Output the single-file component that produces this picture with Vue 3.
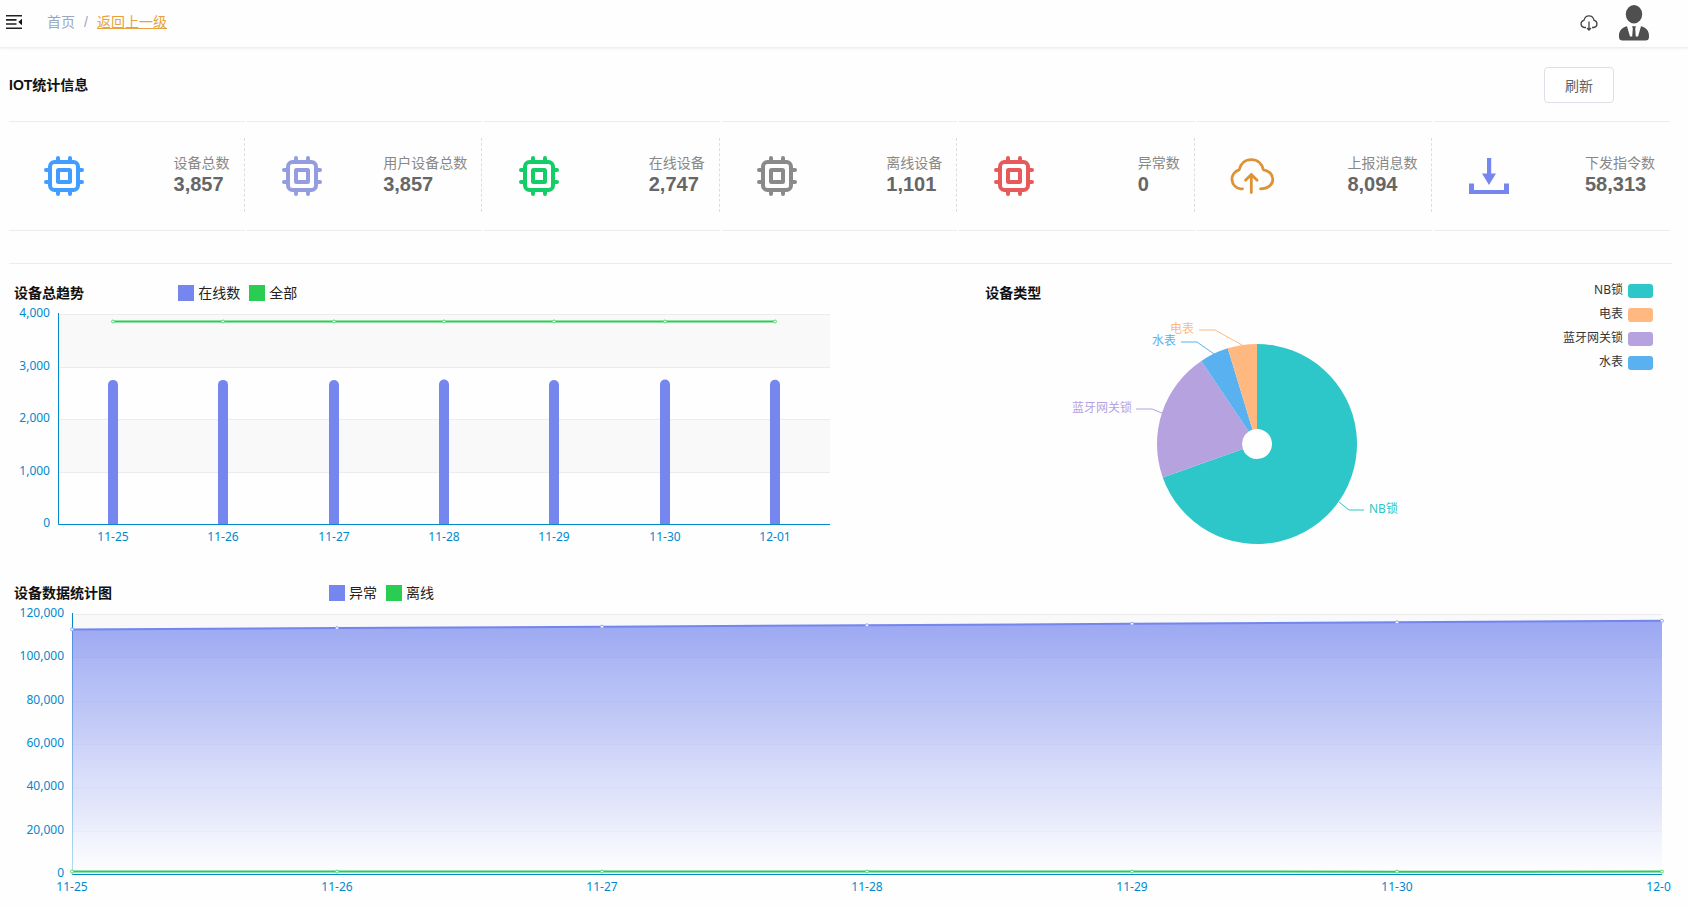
<script setup>
import { computed, onBeforeUnmount, onMounted, ref } from 'vue'

const stats = [
  { label: '设备总数', value: '3,857', icon: 'chip', tone: 'blue' },
  { label: '用户设备总数', value: '3,857', icon: 'chip', tone: 'lavender' },
  { label: '在线设备', value: '2,747', icon: 'chip', tone: 'green' },
  { label: '离线设备', value: '1,101', icon: 'chip', tone: 'gray' },
  { label: '异常数', value: '0', icon: 'chip', tone: 'red' },
  { label: '上报消息数', value: '8,094', icon: 'cloud', tone: 'orange' },
  { label: '下发指令数', value: '58,313', icon: 'download', tone: 'indigo' }
]

const days = ['11-25', '11-26', '11-27', '11-28', '11-29', '11-30', '12-01']

const trendEl = ref(null)
const pieEl = ref(null)
const dataEl = ref(null)
const trendWidth = ref(960)
const pieWidth = ref(690)
const dataWidth = ref(1660)

let observer
function measure() {
  trendWidth.value = trendEl.value.clientWidth
  pieWidth.value = pieEl.value.clientWidth
  dataWidth.value = dataEl.value.clientWidth
}
onMounted(() => {
  measure()
  observer = new ResizeObserver(measure)
  observer.observe(trendEl.value)
  observer.observe(pieEl.value)
  observer.observe(dataEl.value)
})
onBeforeUnmount(() => observer.disconnect())

function buildAxis(max, step, top, bottom) {
  const ticks = []
  for (let v = 0; v <= max; v += step) {
    ticks.push({
      label: v.toLocaleString('en-US'),
      y: Math.round(bottom - (v / max) * (bottom - top))
    })
  }
  const bands = ticks.slice(1).map((t, i) => ({ y: t.y, height: ticks[i].y - t.y, dark: i % 2 === 1 }))
  return { ticks, bands }
}

// Online / total trend
const online = [2745, 2745, 2744, 2751, 2743, 2754, 2747]
const trend = computed(() => {
  const left = 49
  const right = Math.round(trendWidth.value * 0.846)
  const top = 9
  const bottom = 219
  const slot = (right - left) / days.length
  const points = days.map((day, i) => {
    const x = Math.round(left + slot * (i + 0.5))
    const y = bottom - (online[i] / 4000) * (bottom - top)
    return {
      day,
      x,
      totalY: bottom - (3857 / 4000) * (bottom - top),
      bar: `M${x - 5} ${bottom}V${y + 5}a5 5 0 0 1 10 0V${bottom}z`
    }
  })
  return { left, right, top, bottom, points, ...buildAxis(4000, 1000, top, bottom) }
})

// Abnormal / offline statistics
const abnormal = [112900, 113500, 114150, 114800, 115500, 116200, 116900]
const offline = [1110, 1108, 1105, 1104, 1106, 1090, 1101]
const data = computed(() => {
  const left = 63
  const right = dataWidth.value - 10
  const top = 9
  const bottom = 269
  const step = (right - left) / (days.length - 1)
  const scale = v => bottom - (v / 120000) * (bottom - top)
  const points = days.map((day, i) => ({
    day,
    x: Math.round(left + step * i),
    a: scale(abnormal[i]),
    b: scale(offline[i])
  }))
  const line = points.map(p => `${p.x},${p.a}`).join(' ')
  return {
    left, right, top, bottom, points, line,
    area: `${left},${bottom} ${line} ${right},${bottom}`,
    offline: points.map(p => `${p.x},${p.b}`).join(' '),
    ...buildAxis(120000, 20000, top, bottom)
  }
})

// Device types, share given in degrees
const types = [
  { name: 'NB锁', tone: 'teal', from: 0, to: 250.5, guide: '82,58 92,66 107,66', x: 112, y: 65, anchor: 'start' },
  { name: '蓝牙网关锁', tone: 'purple', from: 250.5, to: 326.2, guide: '-95,-31 -105,-35 -121,-35', x: -125, y: -36, anchor: 'end' },
  { name: '水表', tone: 'sky', from: 326.2, to: 343, guide: '-43,-90 -60,-102 -76,-102', x: -81, y: -103, anchor: 'end' },
  { name: '电表', tone: 'peach', from: 343, to: 360, guide: '-15,-99 -42,-114 -58,-114', x: -63, y: -115, anchor: 'end' }
]
const typeLegend = [types[0], types[3], types[1], types[2]]
function sector({ from, to }) {
  const at = (deg, r) => {
    const rad = (deg * Math.PI) / 180
    return `${(r * Math.sin(rad)).toFixed(2)} ${(-r * Math.cos(rad)).toFixed(2)}`
  }
  const large = to - from > 180 ? 1 : 0
  return `M${at(from, 100)}A100 100 0 ${large} 1 ${at(to, 100)}L${at(to, 15)}A15 15 0 ${large} 0 ${at(from, 15)}z`
}
</script>

<template>
  <div class="page">
    <header class="topbar">
      <button class="icon-button menu" type="button" aria-label="折叠菜单">
        <svg width="16" height="14" viewBox="0 0 16 14">
          <path d="M0 .8h16M0 4.900h10.500M0 9h10.500M0 13.200h16" fill="none" stroke="#222" stroke-width="1.600" />
          <path d="M16 3.800v6.400L12.300 7z" fill="#111" />
        </svg>
      </button>
      <nav class="crumbs">
        <span>首页</span>
        <span class="slash">/</span>
        <a href="#">返回上一级</a>
      </nav>
      <button class="icon-button cloud" type="button" aria-label="下载">
        <svg width="18" height="16" viewBox="0 0 18 16" fill="none" stroke="#444" stroke-width="1.3">
          <path d="M6 12.5H4.3A3.6 3.6 0 0 1 3.9 5.4C4.5 2.6 6.5.8 9 .8s4.500 1.800 5.100 4.600a3.600 3.600 0 0 1-.400 7.100H12" />
          <path d="M9 6.500v8.500M7 13l2 2 2-2" />
        </svg>
      </button>
      <svg class="avatar" width="30" height="36" viewBox="0 0 30 36" fill="#4f4f4f">
        <ellipse cx="15" cy="9.200" rx="8.200" ry="9.200" />
        <path d="M8 21.200 11 31.500h2.200l.6-8.300-.800-2h4l-.800 2 .6 8.300H19l3-10.300c5 1.200 8 4.500 8 9.300v1.500c0 2.500-1.300 3.500-3.500 3.500h-23C1.300 35.500 0 34.500 0 32v-1.500c0-4.800 3-8.100 8-9.300z" />
      </svg>
    </header>

    <main class="content">
      <div class="title-row">
        <h1>IOT统计信息</h1>
        <button class="refresh" type="button">刷新</button>
      </div>

      <section class="stats">
        <article v-for="s in stats" :key="s.label" class="stat">
          <div class="stat-body">
            <div class="stat-icon" :class="s.tone">
              <svg v-if="s.icon === 'chip'" width="40" height="40" viewBox="0 0 40 40" fill="none" stroke="currentColor" stroke-width="4">
                <rect x="6" y="6" width="28" height="28" rx="4.500" />
                <rect x="14" y="14" width="12" height="12" rx=".5" />
                <path stroke-linecap="round" d="M14 2v3M26 2v3M14 35v3M26 35v3M2 14h3M2 26h3M35 14h3M35 26h3" />
              </svg>
              <svg v-else-if="s.icon === 'cloud'" width="46" height="36" viewBox="0 0 46 36" fill="none" stroke="currentColor" stroke-width="2.800" stroke-linecap="round" stroke-linejoin="round">
                <path d="M13.500 30.800H11.500A9.700 9.700 0 0 1 10.200 11.800C11.600 5.500 16.200 1.600 22.300 1.600S33 5.500 34.400 11.800C40 12.500 43.800 16.500 43.800 21.300c0 5.500-4.800 9.500-12.300 9.500" />
                <path d="M22.300 34.500v-18M16.500 22.300l5.800-5.800 5.800 5.800" />
              </svg>
              <svg v-else width="40" height="36" viewBox="0 0 40 36" fill="currentColor">
                <path d="M18 0h4.200v15.500H27L20 27l-7-11.500h5z" />
                <path d="M0 25.500h5V32h30v-6.500h5V36H0z" />
              </svg>
            </div>
            <div class="stat-text">
              <div class="stat-label">{{ s.label }}</div>
              <div class="stat-value">{{ s.value }}</div>
            </div>
          </div>
        </article>
      </section>

      <div class="charts">
        <section class="panel">
          <div class="panel-head trend-head">
            <h2>设备总趋势</h2>
            <ul class="legend">
              <li><i class="indigo"></i>在线数</li>
              <li><i class="lime"></i>全部</li>
            </ul>
          </div>
          <div ref="trendEl" class="plot">
            <svg :width="trendWidth" height="245">
              <rect v-for="b in trend.bands" :key="b.y" :x="trend.left" :y="b.y" :width="trend.right - trend.left" :height="b.height" :class="b.dark ? 'band-dark' : 'band-light'" />
              <g v-for="t in trend.ticks" :key="t.label">
                <line class="grid" :x1="trend.left" :x2="trend.right" :y1="t.y + 0.5" :y2="t.y + 0.5" />
                <text class="tick" x="41" :y="t.y + 3" text-anchor="end">{{ t.label }}</text>
              </g>
              <path class="axis" :d="`M${trend.left + 0.5} ${trend.top - 1}V${trend.bottom + 0.5}H${trend.right}`" />
              <path v-for="p in trend.points" :key="p.day" class="bar" :d="p.bar" />
              <line class="green-line" :x1="trend.points[0].x" :x2="trend.points[6].x" :y1="trend.points[0].totalY" :y2="trend.points[0].totalY" />
              <g v-for="p in trend.points" :key="p.day">
                <circle class="dot green-dot" :cx="p.x" :cy="p.totalY" r="1.500" />
                <text class="tick" :x="p.x" y="236" text-anchor="middle">{{ p.day }}</text>
              </g>
            </svg>
          </div>
        </section>

        <section class="panel">
          <div class="panel-head">
            <h2>设备类型</h2>
          </div>
          <ul class="type-legend">
            <li v-for="t in typeLegend" :key="t.name"><span>{{ t.name }}</span><i :class="t.tone"></i></li>
          </ul>
          <div ref="pieEl" class="plot">
            <svg :width="pieWidth" height="245">
              <g :transform="`translate(${Math.round(pieWidth * 0.4)} 139)`">
                <g v-for="t in types" :key="t.name" :class="t.tone">
                  <path :d="sector(t)" fill="currentColor" />
                  <polyline :points="t.guide" fill="none" stroke="currentColor" />
                  <text class="pie-label" :x="t.x" :y="t.y + 4" :text-anchor="t.anchor">{{ t.name }}</text>
                </g>
              </g>
            </svg>
          </div>
        </section>
      </div>

      <section class="panel">
        <div class="panel-head data-head">
          <h2>设备数据统计图</h2>
          <ul class="legend">
            <li><i class="indigo"></i>异常</li>
            <li><i class="lime"></i>离线</li>
          </ul>
        </div>
        <div ref="dataEl" class="plot">
          <svg :width="dataWidth" height="295">
            <defs>
              <linearGradient id="abnormalFill" x1="0" y1="0" x2="0" y2="1">
                <stop offset="0" stop-color="#7385ee" />
                <stop offset="1" stop-color="#ffffff" />
              </linearGradient>
            </defs>
            <rect v-for="b in data.bands" :key="b.y" :x="data.left" :y="b.y" :width="data.right - data.left" :height="b.height" :class="b.dark ? 'band-dark' : 'band-light'" />
            <g v-for="t in data.ticks" :key="t.label">
              <line class="grid" :x1="data.left" :x2="data.right" :y1="t.y + 0.5" :y2="t.y + 0.5" />
              <text class="tick" x="55" :y="t.y + 3" text-anchor="end">{{ t.label }}</text>
            </g>
            <path class="axis" :d="`M${data.left + 0.5} ${data.top - 1}V${data.bottom + 0.5}H${data.right}`" />
            <polygon :points="data.area" fill="url(#abnormalFill)" fill-opacity=".7" />
            <polyline class="indigo-line" :points="data.line" />
            <polyline class="green-line" :points="data.offline" />
            <g v-for="p in data.points" :key="p.day">
              <circle class="dot indigo-dot" :cx="p.x" :cy="p.a" r="1.500" />
              <circle class="dot green-dot" :cx="p.x" :cy="p.b" r="1.500" />
              <text class="tick" :x="p.x" y="286" text-anchor="middle">{{ p.day }}</text>
            </g>
          </svg>
        </div>
      </section>
    </main>
  </div>
</template>

<style>
body {
  margin: 0;
  background: #fefefe;
}
</style>

<style scoped>
.page {
  font-family: "Liberation Sans", "Noto Sans CJK SC", sans-serif;
  font-size: 14px;
  color: #222;
}
h1, h2, ul {
  margin: 0;
  padding: 0;
  list-style: none;
}
.topbar {
  display: flex;
  align-items: center;
  height: 47px;
  padding: 0 39px 0 6px;
  box-shadow: 0 1px 3px rgba(0, 21, 41, 0.1);
}
.icon-button {
  display: flex;
  padding: 0;
  border: 0;
  background: none;
}
.menu {
  margin-top: -4px;
}
.crumbs {
  display: flex;
  margin: -4px auto 0 25px;
  line-height: 20px;
  color: #97a8be;
}
.slash {
  margin: 0 9px;
}
.crumbs a {
  color: #e6a23c;
}
.cloud {
  margin: -2px 21px 0 0;
}
.avatar {
  margin-top: -2px;
}
.content {
  padding: 0 16px 0 9px;
}
.title-row {
  display: flex;
  align-items: center;
  justify-content: space-between;
  height: 72px;
  padding: 2px 58px 0 0;
}
h1 {
  font-size: 14px;
  line-height: 20px;
  color: #111;
}
.refresh {
  width: 70px;
  height: 36px;
  padding: 0;
  border: 1px solid #dcdfe6;
  border-radius: 4px;
  background: #fff;
  color: #606266;
  font: inherit;
}
.stats {
  display: grid;
  grid-template-columns: repeat(7, 1fr);
  column-gap: 2px;
  padding-right: 2px;
}
.stat {
  padding: 16px 0 18px;
  border-top: 1px solid #ececec;
  border-bottom: 1px solid #ececec;
}
.stat-body {
  display: flex;
  justify-content: space-between;
  height: 74px;
  padding-right: 14px;
  border-right: 1px dashed #ddd;
}
.stat:last-child .stat-body {
  border-right-color: transparent;
}
.stat-icon {
  display: flex;
  align-items: center;
  justify-content: center;
  width: 110px;
  padding-top: 2px;
}
.stat-icon svg {
  flex: none;
}
.stat-text {
  padding-top: 15px;
}
.stat-label {
  line-height: 20px;
  color: #888;
}
.stat-value {
  font-size: 20px;
  line-height: 22px;
  font-weight: bold;
  color: #666;
}
.charts {
  display: grid;
  grid-template-columns: 58.4% minmax(0, 1fr);
  margin-top: 32px;
  padding-top: 17px;
  border-top: 1px solid #ececec;
}
.charts + .panel {
  margin-top: 31px;
}
.panel {
  position: relative;
  min-width: 0;
}
.panel-head {
  display: grid;
  grid-template-columns: 1fr;
  align-items: center;
  height: 24px;
  padding-left: 5px;
}
.trend-head {
  grid-template-columns: 17% 1fr;
}
.data-head {
  grid-template-columns: 19% 1fr;
}
h2 {
  font-family: "Noto Sans", "Noto Sans CJK SC", sans-serif;
  font-size: 14px;
  line-height: 20px;
  color: #111;
}
.legend {
  display: flex;
  gap: 9px;
  line-height: 20px;
}
.legend li {
  display: flex;
  align-items: center;
  gap: 4px;
}
.legend i {
  width: 16px;
  height: 16px;
  background: currentColor;
}
.type-legend {
  position: absolute;
  top: -2px;
  right: 19px;
  font-family: "Noto Sans", "Noto Sans CJK SC", sans-serif;
  font-size: 12px;
  line-height: 16px;
  color: #333;
}
.type-legend li {
  display: flex;
  align-items: center;
  justify-content: flex-end;
  gap: 5px;
  height: 24px;
}
.type-legend span {
  padding-bottom: 2px;
}
.type-legend i {
  width: 25px;
  height: 14px;
  border-radius: 3px;
  background: currentColor;
}
.plot {
  overflow: hidden;
}
.plot svg {
  display: block;
}
.blue { color: #409eff; }
.lavender { color: #939ddf; }
.green { color: #13ce66; }
.gray { color: #8a8a8a; }
.red { color: #e65a5a; }
.orange { color: #dd9236; }
.indigo { color: #7587ee; }
.lime { color: #29cd52; }
.teal { color: #2ec7c9; }
.purple { color: #b6a2de; }
.sky { color: #5ab1ef; }
.peach { color: #ffb980; }
.band-light { fill: #fefefe; }
.band-dark { fill: #f9f9f9; }
.grid { stroke: #ececec; }
.axis {
  fill: none;
  stroke: #008acd;
}
.bar { fill: #7587ee; }
.tick,
.pie-label {
  font-family: "Noto Sans", "Noto Sans CJK SC", sans-serif;
  font-size: 12px;
}
.tick { fill: #008acd; }
.pie-label { fill: currentColor; }
.green-line,
.indigo-line {
  fill: none;
  stroke-width: 2px;
}
.green-line { stroke: #29cd52; }
.indigo-line { stroke: #7385ee; }
.dot { fill: #fff; }
.green-dot { stroke: #5ad87a; }
.indigo-dot { stroke: #98a5f2; }
</style>
